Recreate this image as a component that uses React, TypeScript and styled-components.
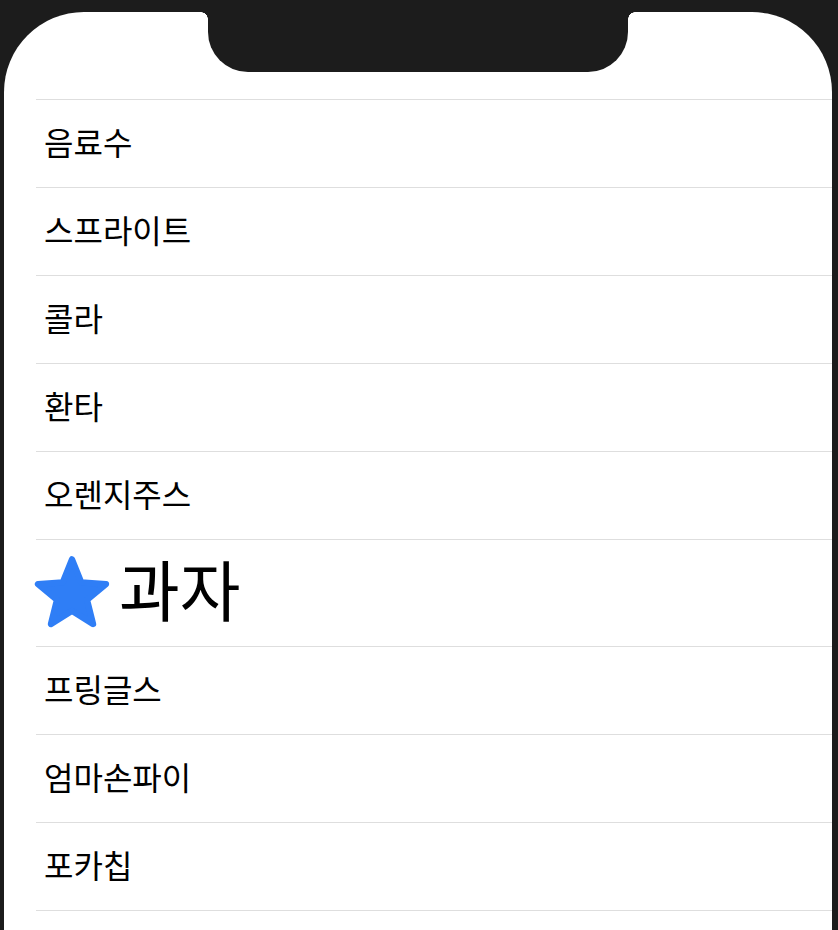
import React from "react";
import styled, { createGlobalStyle } from "styled-components";

const GlobalStyle = createGlobalStyle`
  html, body {
    margin: 0;
    padding: 0;
    height: 100%;
    overflow: hidden;
    background: #1c1c1c;
  }
  body {
    font-family: "Noto Sans CJK KR", "Noto Sans", sans-serif;
  }
`;

const Screen = styled.div`
  margin: 12px 6px 0 4px;
  height: calc(100vh - 12px);
  background: #fff;
  border-radius: 80px 80px 0 0;
`;

const Header = styled.div`
  height: 87px;
  display: flex;
  justify-content: center;
`;

const Notch = styled.div`
  position: relative;
  width: 420px;
  height: 60px;
  background: #1c1c1c;
  border-radius: 0 0 40px 40px;

  &::before,
  &::after {
    content: "";
    position: absolute;
    top: 0;
    width: 7px;
    height: 7px;
  }
  &::before {
    left: -7px;
    background: radial-gradient(circle at 0 100%, transparent 6.5px, #1c1c1c 7px);
  }
  &::after {
    right: -7px;
    background: radial-gradient(circle at 100% 100%, transparent 6.5px, #1c1c1c 7px);
  }
`;

const List = styled.ul`
  list-style: none;
  margin: 0 0 0 32px;
  padding: 0;
  border-top: 1px solid #dedede;
`;

const Row = styled.li<{ $header?: boolean }>`
  display: flex;
  align-items: center;
  gap: ${(p) => (p.$header ? "7px" : "0")};
  height: ${(p) => (p.$header ? "106px" : "87px")};
  padding-left: ${(p) => (p.$header ? "0" : "8px")};
  border-bottom: 1px solid #dedede;
  color: #000;
  font-size: ${(p) => (p.$header ? "66px" : "32px")};
  line-height: 1;
`;

const Label = styled.span<{ $lift: number }>`
  display: block;
  transform: translateY(${(p) => -p.$lift}px);
`;

const Star = styled.svg`
  flex: none;
  margin-left: -4px;
  width: 80px;
  height: 76px;
`;

const drinks = ["음료수", "스프라이트", "콜라", "환타", "오렌지주스"];
const snacks = ["프링글스", "엄마손파이", "포카칩"];

const StarIcon = () => (
  <Star viewBox="0 0 76 72">
    <polygon
      points="38,4 46.8,25.9 70.3,27.5 52.3,42.6 58,65.5 38,53 18,65.5 23.7,42.6 5.7,27.5 29.2,25.9"
      fill="#2f7ef6"
      stroke="#2f7ef6"
      strokeWidth="6"
      strokeLinejoin="round"
    />
  </Star>
);

const App: React.FC = () => {
  return (
    <>
      <GlobalStyle />
      <Screen>
        <Header>
          <Notch />
        </Header>
        <List>
          {drinks.map((name) => (
            <Row key={name}>
              <Label $lift={3}>{name}</Label>
            </Row>
          ))}
          <Row $header>
            <StarIcon />
            <Label $lift={6}>과자</Label>
          </Row>
          {snacks.map((name) => (
            <Row key={name}>
              <Label $lift={3}>{name}</Label>
            </Row>
          ))}
        </List>
      </Screen>
    </>
  );
};

export default App;
